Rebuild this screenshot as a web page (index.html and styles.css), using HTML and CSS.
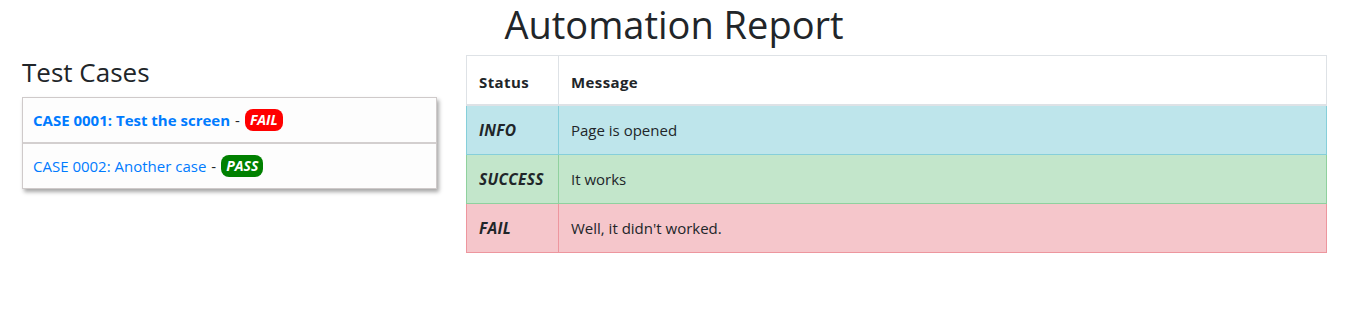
FILE: index.html
```html
<!DOCTYPE html>
<html lang="en">
<head>
  <meta charset="UTF-8" />
  <meta name="viewport" content="width=device-width, initial-scale=1.0"/>
  <title>Automation Report</title>
  <link rel="stylesheet" href="styles.css">
</head>
<body>

<h1>Automation Report</h1>

<div class="row">
  <div class="cases">
    <h3>Test Cases</h3>
    <ul class="case-list">
      <li class="case active">
        <a href="#">CASE 0001: Test the screen</a> - <span class="badge fail">FAIL</span>
      </li>
      <li class="case">
        <a href="#">CASE 0002: Another case</a> - <span class="badge pass">PASS</span>
      </li>
    </ul>
  </div>

  <div class="steps">
    <table class="report">
      <thead>
        <tr>
          <th class="status-col">Status</th>
          <th>Message</th>
        </tr>
      </thead>
      <tbody>
        <tr class="info">
          <td class="status">INFO</td>
          <td>Page is opened</td>
        </tr>
        <tr class="success">
          <td class="status">SUCCESS</td>
          <td>It works</td>
        </tr>
        <tr class="danger">
          <td class="status">FAIL</td>
          <td>Well, it didn't worked.</td>
        </tr>
      </tbody>
    </table>
  </div>
</div>

</body>
</html>
```

FILE: styles.css
```css
body {
  font-family: "Open Sans", "Noto Sans", sans-serif;
  font-size: 15px;
  line-height: 24px;
  color: #212529;
  background-color: #fff;
  margin: 0;
}
h1 {
  text-align: center;
  font-weight: 400;
  font-size: 38px;
  line-height: 48px;
  margin: 0 0 7px;
  padding-right: 8px;
}
h3 {
  font-weight: 400;
  font-size: 26px;
  line-height: 34px;
  margin: 0 0 8px;
}
.row {
  display: flex;
  align-items: flex-start;
  gap: 29px;
  padding-left: 22px;
}
.cases {
  width: 415px;
  flex-shrink: 0;
}
.case-list {
  list-style: none;
  margin: 0;
  padding: 0;
  border: 1px solid #cfcaca;
  box-shadow: 2px 3px 4px rgba(0, 0, 0, 0.35);
  background-color: #fdfdfd;
}
.case {
  height: 44px;
  padding: 0 10px;
  display: flex;
  align-items: center;
  gap: 5px;
  color: #212529;
}
.case + .case {
  border-top: 2px solid #d3cfcf;
}
.case a {
  color: #007bff;
  text-decoration: none;
}
.case.active a {
  font-weight: 700;
}
.badge {
  color: #fff;
  font-weight: 700;
  font-style: italic;
  font-size: 14px;
  line-height: 22px;
  padding: 0 5px;
  border-radius: 8px;
}
.badge.fail {
  background-color: #ff0000;
}
.badge.pass {
  background-color: #008000;
}
.steps {
  width: 861px;
}
.report {
  width: 100%;
  border-collapse: collapse;
}
.report th, .report td {
  text-align: left;
  padding: 12px;
  border: 1px solid #dee2e6;
}
.report th {
  font-size: 15px;
  font-weight: 700;
  letter-spacing: 0.4px;
  padding: 14px 12px 10px;
  border-bottom: 2px solid #dee2e6;
}
.status-col {
  width: 67px;
}
.report td.status {
  font-size: 15.5px;
  font-weight: 700;
  font-style: italic;
  letter-spacing: 0.3px;
}
.info td {
  background-color: #bee5eb;
  border-color: #86cfda;
}
.success td {
  background-color: #c3e6cb;
  border-color: #8fd19e;
}
.danger td {
  background-color: #f5c6cb;
  border-color: #ed969e;
}
```
